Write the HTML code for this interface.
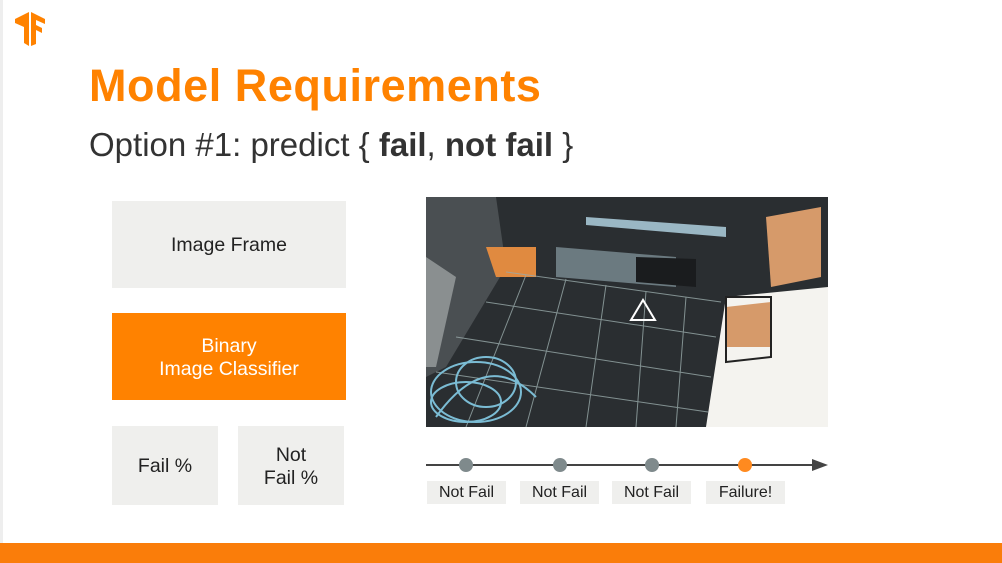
<!DOCTYPE html>
<html><head><style>
body{margin:0;width:1002px;height:563px;background:#fff;position:relative;overflow:hidden;font-family:"Liberation Sans",sans-serif;}
.a{position:absolute}
.box{position:absolute;background:#efefed;display:flex;align-items:center;justify-content:center;text-align:center;color:#222;font-size:19.5px;line-height:23px;padding-top:2px;box-sizing:border-box}
.lab{position:absolute;top:481px;height:23px;background:#efefed;color:#222;font-size:16px;line-height:23px;text-align:center}
.dot{position:absolute;top:458px;width:14px;height:14px;border-radius:50%;background:#7f8a8c}
</style></head><body>
<div class="a" style="left:0;top:0;width:3px;height:543px;background:#eee"></div>
<svg class="a" style="left:13px;top:11px" width="34" height="36" viewBox="0 0 34 36">
<path d="M2 8 L16 1 L16 35 L11 32 L11 16 L2 12Z" fill="#ff8200"/>
<path d="M18 1 L32 8 L32 13 L23 9 L23 14 L29 17 L29 22 L23 19 L23 33 L18 35Z" fill="#ff8200"/>
</svg>
<div class="a" style="left:89px;top:60px;font-size:45px;font-weight:bold;letter-spacing:.55px;color:#ff8200">Model Requirements</div>
<div class="a" style="left:89px;top:126px;font-size:33px;color:#333">Option #1: predict { <b>fail</b>, <b>not fail</b> }</div>
<div class="box" style="left:112px;top:201px;width:234px;height:87px">Image Frame</div>
<div class="box" style="left:112px;top:313px;width:234px;height:87px;background:#ff8200;color:#fff">Binary<br>Image Classifier</div>
<div class="box" style="left:112px;top:426px;width:106px;height:79px">Fail %</div>
<div class="box" style="left:238px;top:426px;width:106px;height:79px">Not<br>Fail %</div>
<svg class="a" style="left:426px;top:197px" width="402" height="230" viewBox="0 0 402 230">
<rect width="402" height="230" fill="#2a2e31"/>
<path d="M300 100 L402 90 L402 230 L280 230Z" fill="#f4f3ef"/>
<path d="M0 0 L70 0 L80 70 L20 170 L0 180Z" fill="#4a4f52"/>
<path d="M0 60 L30 80 L10 170 L0 170Z" fill="#8a8f90"/>
<path d="M130 50 L250 60 L250 90 L130 80Z" fill="#6b7a80"/>
<path d="M160 20 L300 30 L300 40 L160 28Z" fill="#9ab7c4"/>
<path d="M210 60 L270 62 L270 90 L210 85Z" fill="#1a1c1e"/>
<path d="M60 50 L110 50 L110 80 L70 80Z" fill="#e08a40"/>
<path d="M340 20 L395 10 L395 80 L345 90Z" fill="#d69a6a"/>
<path d="M300 110 L345 105 L345 150 L300 150Z" fill="#d69a6a"/>
<path d="M300 100 L345 100 L345 160 L300 165Z" fill="none" stroke="#222" stroke-width="2"/>
<g stroke="#9aa" stroke-width="1" fill="none" opacity=".8">
<path d="M80 75 L295 105 M60 105 L290 140 M30 140 L285 180 M10 175 L282 215"/>
<path d="M100 78 L40 230 M140 82 L100 230 M180 88 L160 230 M220 94 L210 230 M260 100 L250 230"/>
</g>
<g stroke="#7bbcd4" stroke-width="2" fill="none">
<ellipse cx="50" cy="195" rx="45" ry="30"/><ellipse cx="40" cy="205" rx="35" ry="20"/><ellipse cx="60" cy="185" rx="30" ry="25"/>
<path d="M10 220 Q60 150 110 200"/>
</g>
<path d="M205 123 L217 103 L229 123Z" fill="none" stroke="#fff" stroke-width="2"/>
</svg>
<div class="a" style="left:426px;top:464px;width:392px;height:2px;background:#444"></div>
<svg class="a" style="left:812px;top:459px" width="16" height="12"><path d="M0 0 L16 6 L0 12Z" fill="#444"/></svg>
<div class="dot" style="left:459px"></div>
<div class="dot" style="left:553px"></div>
<div class="dot" style="left:645px"></div>
<div class="dot" style="left:738px;background:#ff8a1f"></div>
<div class="lab" style="left:427px;width:79px">Not Fail</div>
<div class="lab" style="left:520px;width:79px">Not Fail</div>
<div class="lab" style="left:612px;width:79px">Not Fail</div>
<div class="lab" style="left:706px;width:79px">Failure!</div>
<div class="a" style="left:0;top:543px;width:1002px;height:20px;background:#fa7d0a"></div>
</body></html>
